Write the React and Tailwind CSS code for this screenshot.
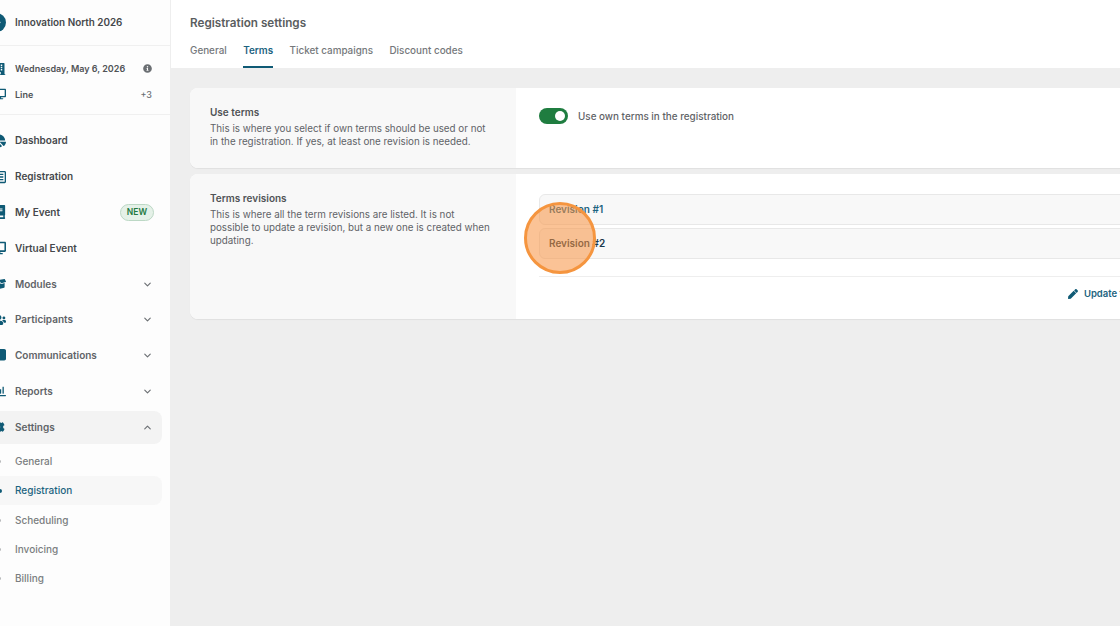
import { FaArrowLeft, FaBook, FaBoxOpen, FaBuilding, FaChartPie, FaCog, FaCommentAlt, FaDesktop, FaInfoCircle, FaPen, FaRegListAlt, FaUsers, FaRegChartBar } from "react-icons/fa";
import { ChevronDown, ChevronUp } from "lucide-react";

const topNav = [
  { label: "Dashboard", icon: FaChartPie },
  { label: "Registration", icon: FaRegListAlt },
  { label: "My Event", icon: FaBook, badge: true },
  { label: "Virtual Event", icon: FaDesktop },
  { label: "Modules", icon: FaBoxOpen, chevron: true },
  { label: "Participants", icon: FaUsers, chevron: true },
  { label: "Communications", icon: FaCommentAlt, chevron: true },
  { label: "Reports", icon: FaRegChartBar, chevron: true },
];

const subNav = ["General", "Registration", "Scheduling", "Invoicing", "Billing"];
const tabs = ["General", "Terms", "Ticket campaigns", "Discount codes"];

function NavItem({ item }) {
  const Icon = item.icon;
  return (
    <div className="flex h-[35.8px] items-center pr-[16px]">
      <Icon className="ml-[-8px] mr-[9px] size-[14px] shrink-0 text-[#0f5a75]" />
      <span className={`flex-1 text-[10px] font-semibold ${item.chevron ? "text-[#5f6367]" : "text-[#45484b]"}`}>{item.label}</span>
      {item.badge && (
        <span className="flex h-[17px] w-[34px] items-center justify-center rounded-full border border-[#bcd8c5] bg-[#e5f1e8] text-[8.5px] font-semibold text-[#237a43]">
          NEW
        </span>
      )}
      {item.chevron && <ChevronDown className="mr-[1px] size-[11px] text-[#6b6f73]" strokeWidth={2.5} />}
    </div>
  );
}

function Sidebar() {
  return (
    <aside className="flex h-full w-[171px] shrink-0 flex-col border-r border-[#eeeeee] bg-[#fdfdfd]">
      <div className="flex h-[46px] shrink-0 items-center border-b border-[#f0f0f0]">
        <span className="ml-[-13px] mr-[9px] flex size-[19px] items-center justify-center rounded-full bg-[#0f5a75]">
          <FaArrowLeft className="size-[9px] text-white" />
        </span>
        <span className="text-[9.9px] font-semibold text-[#45484b]">Innovation North 2026</span>
      </div>
      <div className="flex h-[69px] shrink-0 flex-col justify-center gap-[12px] border-b border-[#f0f0f0] pr-[18px] pt-[3px]">
        <div className="flex items-center">
          <FaBuilding className="ml-[-6px] mr-[9px] size-[12px] text-[#0f5a75]" />
          <span className="flex-1 text-[9px] font-semibold text-[#505356]">Wednesday, May 6, 2026</span>
          <FaInfoCircle className="size-[9px] text-[#6b6f73]" />
        </div>
        <div className="flex items-center">
          <FaDesktop className="ml-[-6px] mr-[9px] size-[12px] text-[#0f5a75]" />
          <span className="flex-1 text-[9px] font-semibold text-[#505356]">Line</span>
          <span className="text-[9px] font-medium text-[#6b6f73]">+3</span>
        </div>
      </div>
      <nav className="flex flex-col pt-[8px]">
        {topNav.map((item) => (
          <NavItem key={item.label} item={item} />
        ))}
        <div className="mr-[8px] mt-[1.6px] flex h-[33px] items-center rounded-r-[8px] bg-[#f3f3f3] pr-[9px]">
          <FaCog className="ml-[-9px] mr-[10px] size-[14px] text-[#0f5a75]" />
          <span className="flex-1 text-[10px] font-semibold text-[#5f6367]">Settings</span>
          <ChevronUp className="size-[11px] text-[#6b6f73]" strokeWidth={2.5} />
        </div>
        <div className="mt-[2.6px] flex flex-col">
          {subNav.map((label) => {
            const active = label === "Registration";
            return (
              <div key={label} className={`mr-[8px] flex h-[29.4px] items-center rounded-r-[8px] ${active ? "bg-[#f7f7f7]" : ""}`}>
                <span className={`rounded-full ${active ? "ml-[-2px] mr-[13px] size-[4px] bg-[#0f5a75]" : "ml-[-2px] mr-[14px] size-[3px] bg-[#b5b7b9]"}`} />
                <span className={`text-[10px] font-medium ${active ? "text-[#1c6380]" : "text-[#7a7d80]"}`}>{label}</span>
              </div>
            );
          })}
        </div>
      </nav>
    </aside>
  );
}

function Card({ title, children, right, className }) {
  return (
    <section className={`flex w-[979px] overflow-hidden rounded-[8px] bg-white shadow-[0_1px_1px_rgba(0,0,0,0.06)] ${className}`}>
      <div className="w-[326px] shrink-0 bg-[#f8f8f8] pl-[20px] pr-[24px] pt-[17px]">
        <h2 className="mb-[3px] text-[10px] font-semibold leading-[14px] text-[#505356]">{title}</h2>
        <p className="text-[9.8px] leading-[13px] text-[#5f6367]">{children}</p>
      </div>
      <div className="min-w-0 flex-1">{right}</div>
    </section>
  );
}

export default function App() {
  return (
    <div className="relative flex h-[626px] w-[1120px] overflow-hidden bg-[#eeeeee] font-['Inter',sans-serif]">
      <Sidebar />
      <main className="min-w-0 flex-1">
        <header className="h-[68px] bg-white pl-[19px] pt-[16px]">
          <h1 className="text-[11.7px] font-semibold leading-[14px] text-[#5a5d60]">Registration settings</h1>
          <div className="mt-[5px] flex gap-[16.4px]">
            {tabs.map((tab) => (
              <div key={tab} className={`flex h-[33px] items-center border-b-2 pb-[1px] text-[9.9px] font-medium ${tab === "Terms" ? "border-[#0f5a75] font-semibold text-[#1c6380]" : "border-transparent text-[#75787b]"}`}>
                {tab}
              </div>
            ))}
          </div>
        </header>
        <div className="flex flex-col gap-[6px] pl-[19px] pt-[20px]">
          <Card
            className="h-[80px]"
            title="Use terms"
            right={
              <div className="flex items-center gap-[10px] pl-[23px] pt-[20px]">
                <span className="flex h-[16px] w-[29px] items-center justify-end rounded-full bg-[#1f7d40] pr-[3px]">
                  <span className="size-[10px] rounded-full bg-white" />
                </span>
                <span className="text-[9.9px] font-medium text-[#5f6367]">Use own terms in the registration</span>
              </div>
            }
          >
            This is where you select if own terms should be used or not in the registration. If yes, at least one revision is needed.
          </Card>
          <Card
            className="h-[145px]"
            title="Terms revisions"
            right={
              <div className="px-[23px] pt-[20px]">
                <div className="flex flex-col gap-[3px] border-b border-[#eeeeee] pb-[17px]">
                  <div className="flex h-[31px] items-center rounded-[6px] border border-[#e8e8e8] bg-[#f8f8f8] pl-[9px] text-[10px] font-semibold text-[#1c6380]">Revision #1</div>
                  <div className="flex h-[31px] items-center rounded-[6px] border border-[#e8e8e8] bg-[#f8f8f8] pl-[9px] text-[10px] font-semibold text-[#17374a]">Revision #2</div>
                </div>
                <div className="flex items-center justify-end gap-[6px] pt-[10px] text-[9.5px] font-semibold text-[#1c6380]">
                  <FaPen className="size-[10px] text-[#0f5a75]" />
                  <span>Update terms</span>
                </div>
              </div>
            }
          >
            This is where all the term revisions are listed. It is not possible to update a revision, but a new one is created when updating.
          </Card>
        </div>
      </main>
      <div className="absolute left-[524px] top-[202px] size-[72px] rounded-full border-[3px] border-[#f5953f] bg-[#f7923f]/55" />
    </div>
  );
}
